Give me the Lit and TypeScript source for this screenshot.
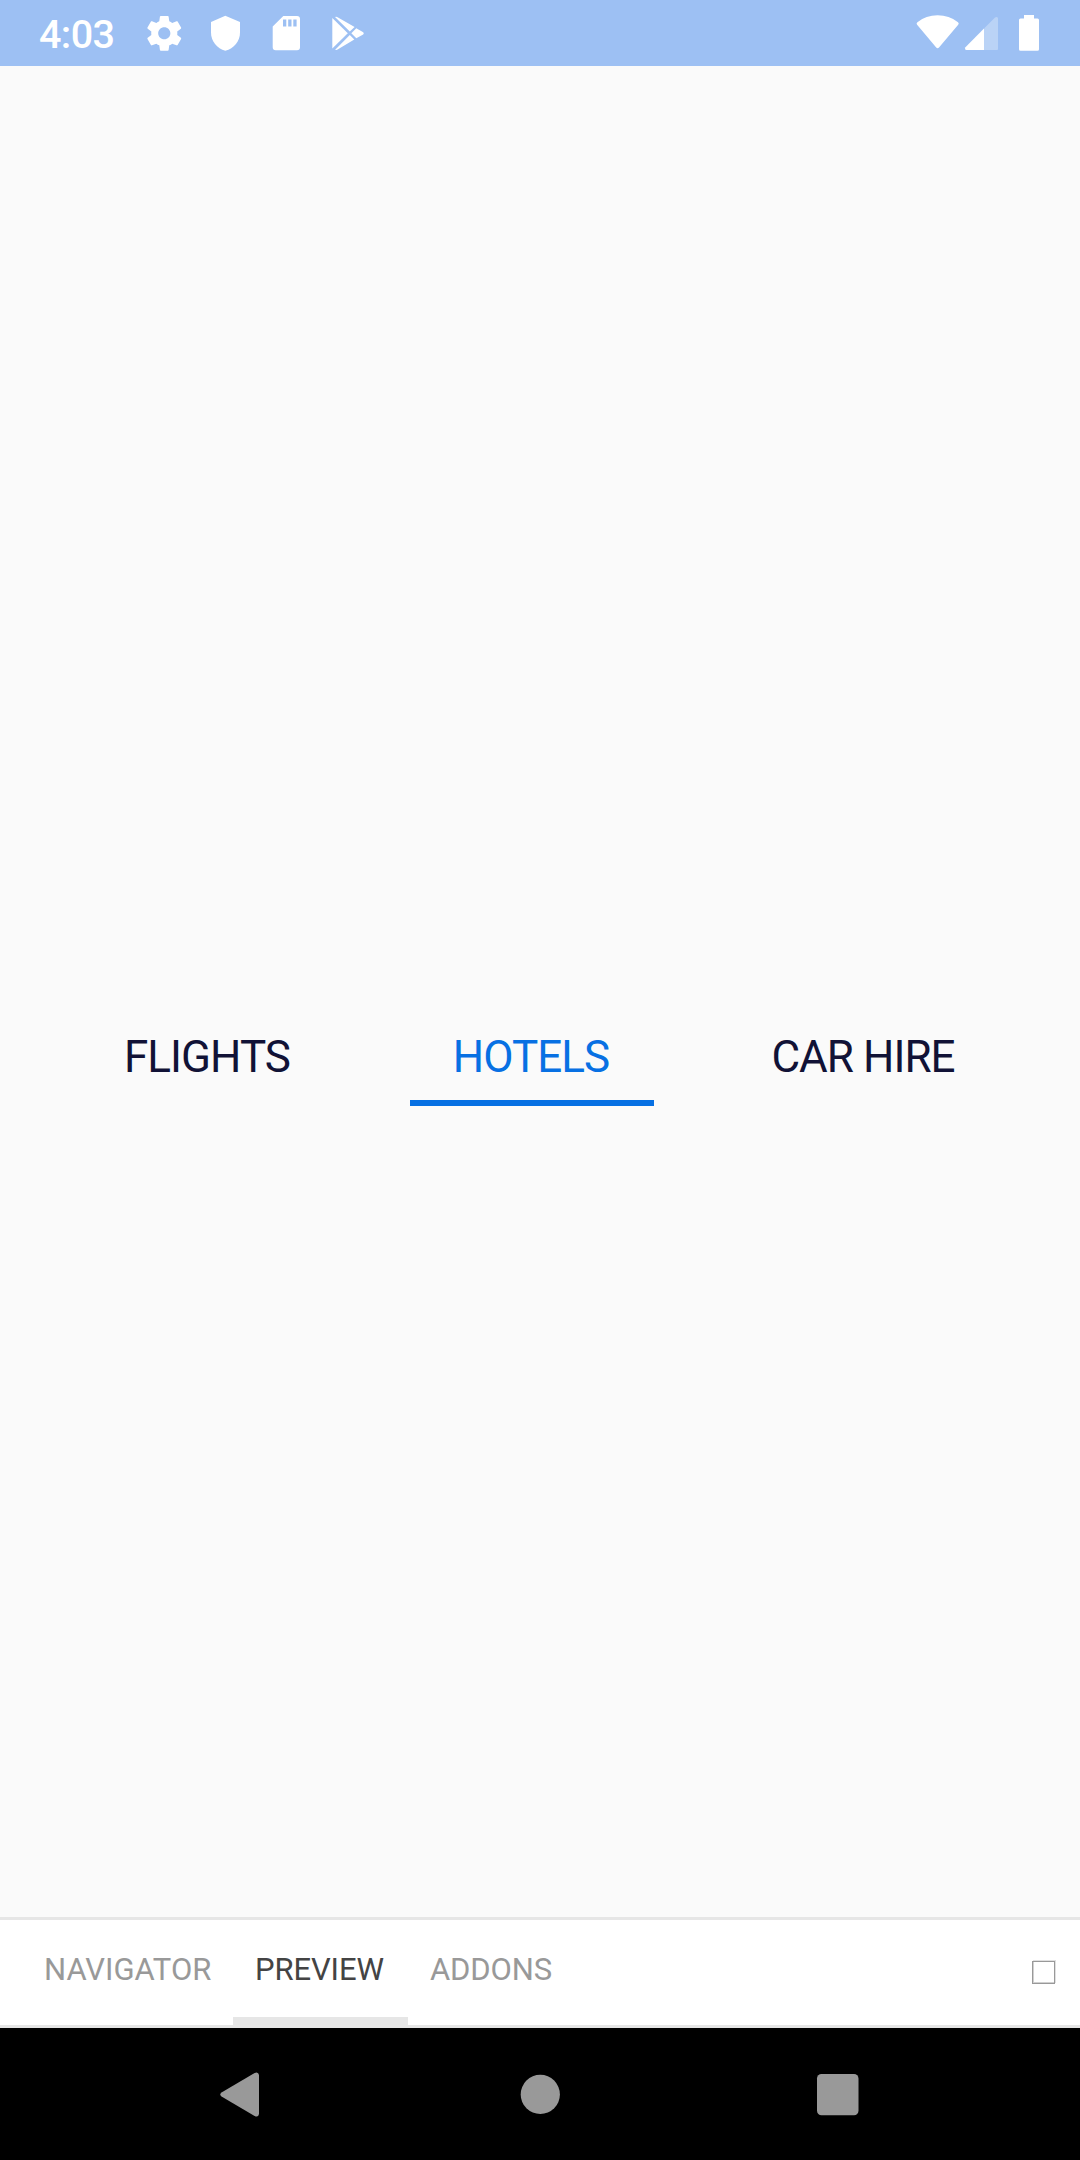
import { LitElement, html, css, svg } from "lit";
import { customElement, state } from "lit/decorators.js";
import { classMap } from "lit/directives/class-map.js";

@customElement("status-bar")
class StatusBar extends LitElement {
  static styles = css`
    :host {
      display: flex;
      height: 66px;
      background: #9dc0f3;
      color: #fff;
      font: 500 39.5px/66px Roboto, sans-serif;
    }
    .time {
      width: 136px;
      box-sizing: border-box;
      padding-left: 39px;
      white-space: nowrap;
      padding-top: 2px;
      letter-spacing: -0.6px;
    }
    svg {
      display: block;
      fill: currentColor;
    }
    .right {
      margin-left: auto;
    }
  `;
  render() {
    return html`
      <div class="time">4:03</div>
      <svg width="244" height="66" viewBox="136 0 244 66">
        <g transform="translate(143.4 12.4) scale(1.74)">
          <path d="M19.43 12.98c.04-.32.07-.64.07-.98s-.03-.66-.07-.98l2.11-1.65c.19-.15.24-.42.12-.64l-2-3.46c-.12-.22-.39-.3-.61-.22l-2.49 1c-.52-.4-1.08-.73-1.69-.98l-.38-2.65C14.46 2.18 14.25 2 14 2h-4c-.25 0-.46.18-.49.42l-.38 2.65c-.61.25-1.17.59-1.69.98l-2.49-1c-.23-.09-.49 0-.61.22l-2 3.46c-.13.22-.07.49.12.64l2.11 1.65c-.04.32-.07.65-.07.98s.03.66.07.98l-2.11 1.65c-.19.15-.24.42-.12.64l2 3.46c.12.22.39.3.61.22l2.49-1c.52.4 1.08.73 1.69.98l.38 2.65c.03.24.24.42.49.42h4c.25 0 .46-.18.49-.42l.38-2.65c.61-.25 1.17-.59 1.69-.98l2.49 1c.23.09.49 0 .61-.22l2-3.46c.12-.22.07-.49-.12-.64l-2.11-1.65zM12 15.5c-1.93 0-3.500-1.570-3.500-3.500s1.570-3.500 3.500-3.500 3.500 1.570 3.500 3.500-1.570 3.500-3.500 3.500z" />
        </g>
        <path d="M225.300 15.800 L240 22 V32.500 C240 41 234 48.700 225.300 50.700 C217 48.700 211 41 211 32.500 V22 Z" />
        <path
          fill-rule="evenodd"
          d="M283.300 16 H297 a3 3 0 0 1 3 3 V47.300 a3 3 0 0 1 -3 3 H275.700 a3 3 0 0 1 -3 -3 V26.600 Z M283 19.500 V26.500 H286.300 V19.500 Z M288.200 19.500 V26.500 H291.500 V19.500 Z M293.300 19.500 V26.500 H296.600 V19.500 Z"
        />
        <path d="M332.300 18 L347.800 33.300 L332.300 48.600 Z" />
        <path d="M335 17 Q336.500 16.400 338 17.500 L354.600 27 L349.800 31.600 Z" />
        <path d="M349.800 35 L354.300 39.500 L338 49.300 Q336.500 50.300 335.200 49.700 Z" />
        <path d="M356.300 28.200 L363.200 32.200 Q364.400 33.300 363.200 34.400 L356.300 38.300 L351.300 33.300 Z" />
      </svg>
      <svg class="right" width="180" height="66" viewBox="900 0 180 66">
        <path d="M917.100 24.800 Q915.900 23.300 917.400 22.200 Q926 15.300 937.600 15.300 Q949.200 15.300 958 22.200 Q959.400 23.300 958.200 24.800 L939.200 47.300 Q937.600 49.100 936 47.300 Z" />
        <path d="M984 28.500 V50 H966.300 Q964.300 49.500 965.200 47.500 Z" />
        <path opacity="0.3" d="M984 28.500 L995 17.500 Q997.200 16 998 18.300 V49 Q998 50 997 50 H984 Z" />
        <path d="M1024 15 h10 v3.500 h3.500 q1.500 0 1.500 1.500 v29.300 q0 1.500 -1.500 1.500 h-17 q-1.500 0 -1.500 -1.500 v-29.300 q0 -1.500 1.500 -1.500 h3.500 z" />
      </svg>
    `;
  }
}

@customElement("nav-bar")
class NavBar extends LitElement {
  static styles = css`
    :host {
      display: block;
      height: 132px;
      background: #000;
    }
    svg {
      display: block;
      fill: #999;
    }
  `;
  render() {
    return html`
      <svg width="1080" height="132" viewBox="0 0 1080 132">
        ${svg`
          <path d="M221.500 64.400 L254.600 45 Q258.300 43.300 259 47 V86 Q258.300 89.700 254.600 88 L221.500 68.600 Q219 66.500 221.500 64.400 Z" />
          <circle cx="540.300" cy="66.400" r="19.600" />
          <rect x="817" y="46" width="41.500" height="41.300" rx="4.500" />
        `}
      </svg>
    `;
  }
}

@customElement("app-root")
class AppRoot extends LitElement {
  static styles = css`
    :host {
      display: flex;
      flex-direction: column;
      height: 2160px;
      background: #fafafa;
      font-family: Roboto, sans-serif;
    }
    .content {
      flex: 1;
      display: flex;
      flex-direction: column;
      justify-content: flex-end;
      padding-bottom: 811px;
    }
    .tabs {
      display: flex;
      padding-left: 77px;
    }
    .tab {
      box-sizing: border-box;
      height: 96px;
      padding: 21px 2px 17px 0;
      border-bottom: 6px solid transparent;
      color: #111236;
      font-size: 44px;
      line-height: 52px;
      letter-spacing: -0.95px;
      text-align: center;
      white-space: nowrap;
    }
    .flights {
      width: 262px;
      margin-right: 71px;
    }
    .hotels {
      width: 244px;
      margin-right: 71px;
    }
    .cars {
      width: 278px;
    }
    .selected {
      color: #0770e3;
      border-bottom-color: #0770e3;
    }
    .panel {
      display: flex;
      box-sizing: border-box;
      height: 111px;
      padding: 0 22px;
      background: #fff;
      border-top: 3px solid #e6e6e6;
      border-bottom: 3px solid #e6e6e6;
      align-items: stretch;
    }
    .item {
      box-sizing: border-box;
      padding: 0 22px;
      border-bottom: 8px solid transparent;
      color: #999;
      font-size: 31px;
      line-height: 99px;
      white-space: nowrap;
    }
    .navigator {
      width: 211px;
    }
    .preview {
      width: 175px;
    }
    .preview,
    .addons {
      letter-spacing: -0.1px;
    }
    .active {
      color: #444;
      border-bottom-color: #e6e6e6;
    }
    .box {
      box-sizing: border-box;
      width: 23px;
      height: 23px;
      margin: 41px 3px 0 auto;
      border: 1px solid #999;
      box-shadow: 1px -1px 0 #e0e0e0, inset 1px -1px 0 #d0d0d0;
    }
  `;

  @state() tab = "hotels";
  @state() pane = "preview";

  render() {
    const tabs = [
      ["flights", "FLIGHTS"],
      ["hotels", "HOTELS"],
      ["cars", "CAR HIRE"],
    ];
    const panes = [
      ["navigator", "NAVIGATOR"],
      ["preview", "PREVIEW"],
      ["addons", "ADDONS"],
    ];
    return html`
      <status-bar></status-bar>
      <div class="content">
        <div class="tabs">
          ${tabs.map(
            ([id, label]) => html`<div
              class=${classMap({ tab: true, [id]: true, selected: id === this.tab })}
              @click=${() => (this.tab = id)}
            >${label}</div>`
          )}
        </div>
      </div>
      <div class="panel">
        ${panes.map(
          ([id, label]) => html`<div
            class=${classMap({ item: true, [id]: true, active: id === this.pane })}
            @click=${() => (this.pane = id)}
          >${label}</div>`
        )}
        <div class="box"></div>
      </div>
      <nav-bar></nav-bar>
    `;
  }
}
